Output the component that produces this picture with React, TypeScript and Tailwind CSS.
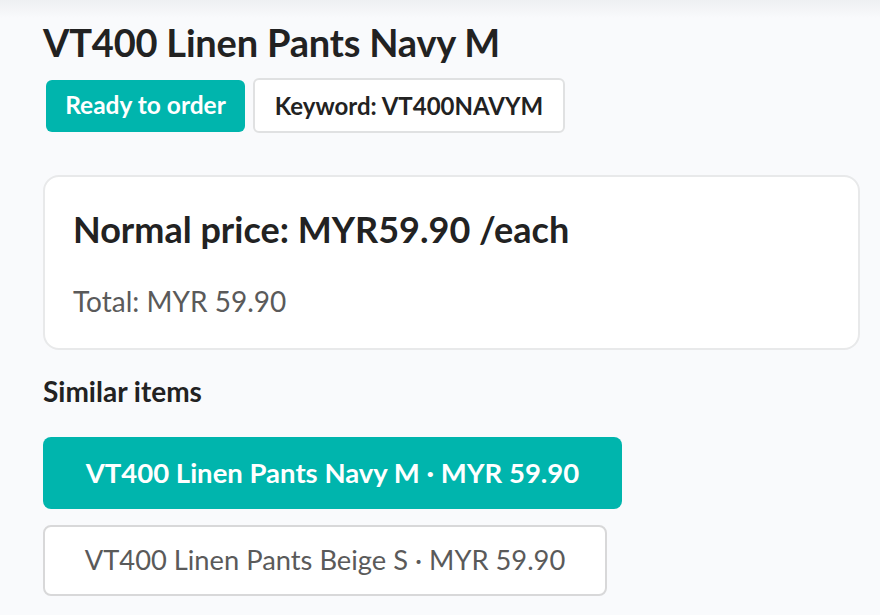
export default function App() {
  return (
    <div
      className="min-h-[615px] w-full bg-[#f9fafc] text-[#222]"
      style={{ fontFamily: 'Lato, "Noto Sans", sans-serif' }}
    >
      <div className="h-[18px] bg-gradient-to-b from-[#eef0f2] to-[#f9fafc]" />
      <div className="pl-[43px] pr-[20px]">
        <h1 className="text-[38px] font-bold leading-[48px] tracking-[-0.2px]">VT400 Linen Pants Navy M</h1>

        <div className="mt-[12px] flex items-center gap-[8px] pl-[3px]">
          <span className="flex h-[52px] w-[199px] items-center justify-center rounded-[6px] bg-[#00b5ad] text-[24.5px] font-bold text-white">
            Ready to order
          </span>
          <span className="flex h-[55px] w-[312px] items-center justify-center rounded-[6px] border-2 border-[#e0e1e2] bg-white text-[24px] font-bold text-[#222]">
            Keyword: VT400NAVYM
          </span>
        </div>

        <div className="mt-[42px] h-[175px] rounded-[16px] border-2 border-[#e8e9ea] bg-white px-[28px] pt-[30px]">
          <div className="text-[36px] font-bold leading-[44px]">Normal price: MYR59.90 /each</div>
          <div className="mt-[33px] text-[28px] leading-[34px] text-[#5a5a5a]">Total: MYR 59.90</div>
        </div>

        <h2 className="mt-[25px] text-[28px] font-bold leading-[32px]">Similar items</h2>

        <div className="mt-[30px] flex flex-col items-start gap-[16px]">
          <button className="flex h-[72px] w-[579px] items-center justify-center rounded-[8px] bg-[#00b5ad] text-[27.5px] font-bold text-white">
            VT400 Linen Pants Navy M · MYR 59.90
          </button>
          <button className="flex h-[71px] w-[564px] items-center justify-center rounded-[8px] border-2 border-[#d8d8d9] bg-white text-[27.3px] text-[#5a5a5a]">
            VT400 Linen Pants Beige S · MYR 59.90
          </button>
        </div>
      </div>
    </div>
  )
}
